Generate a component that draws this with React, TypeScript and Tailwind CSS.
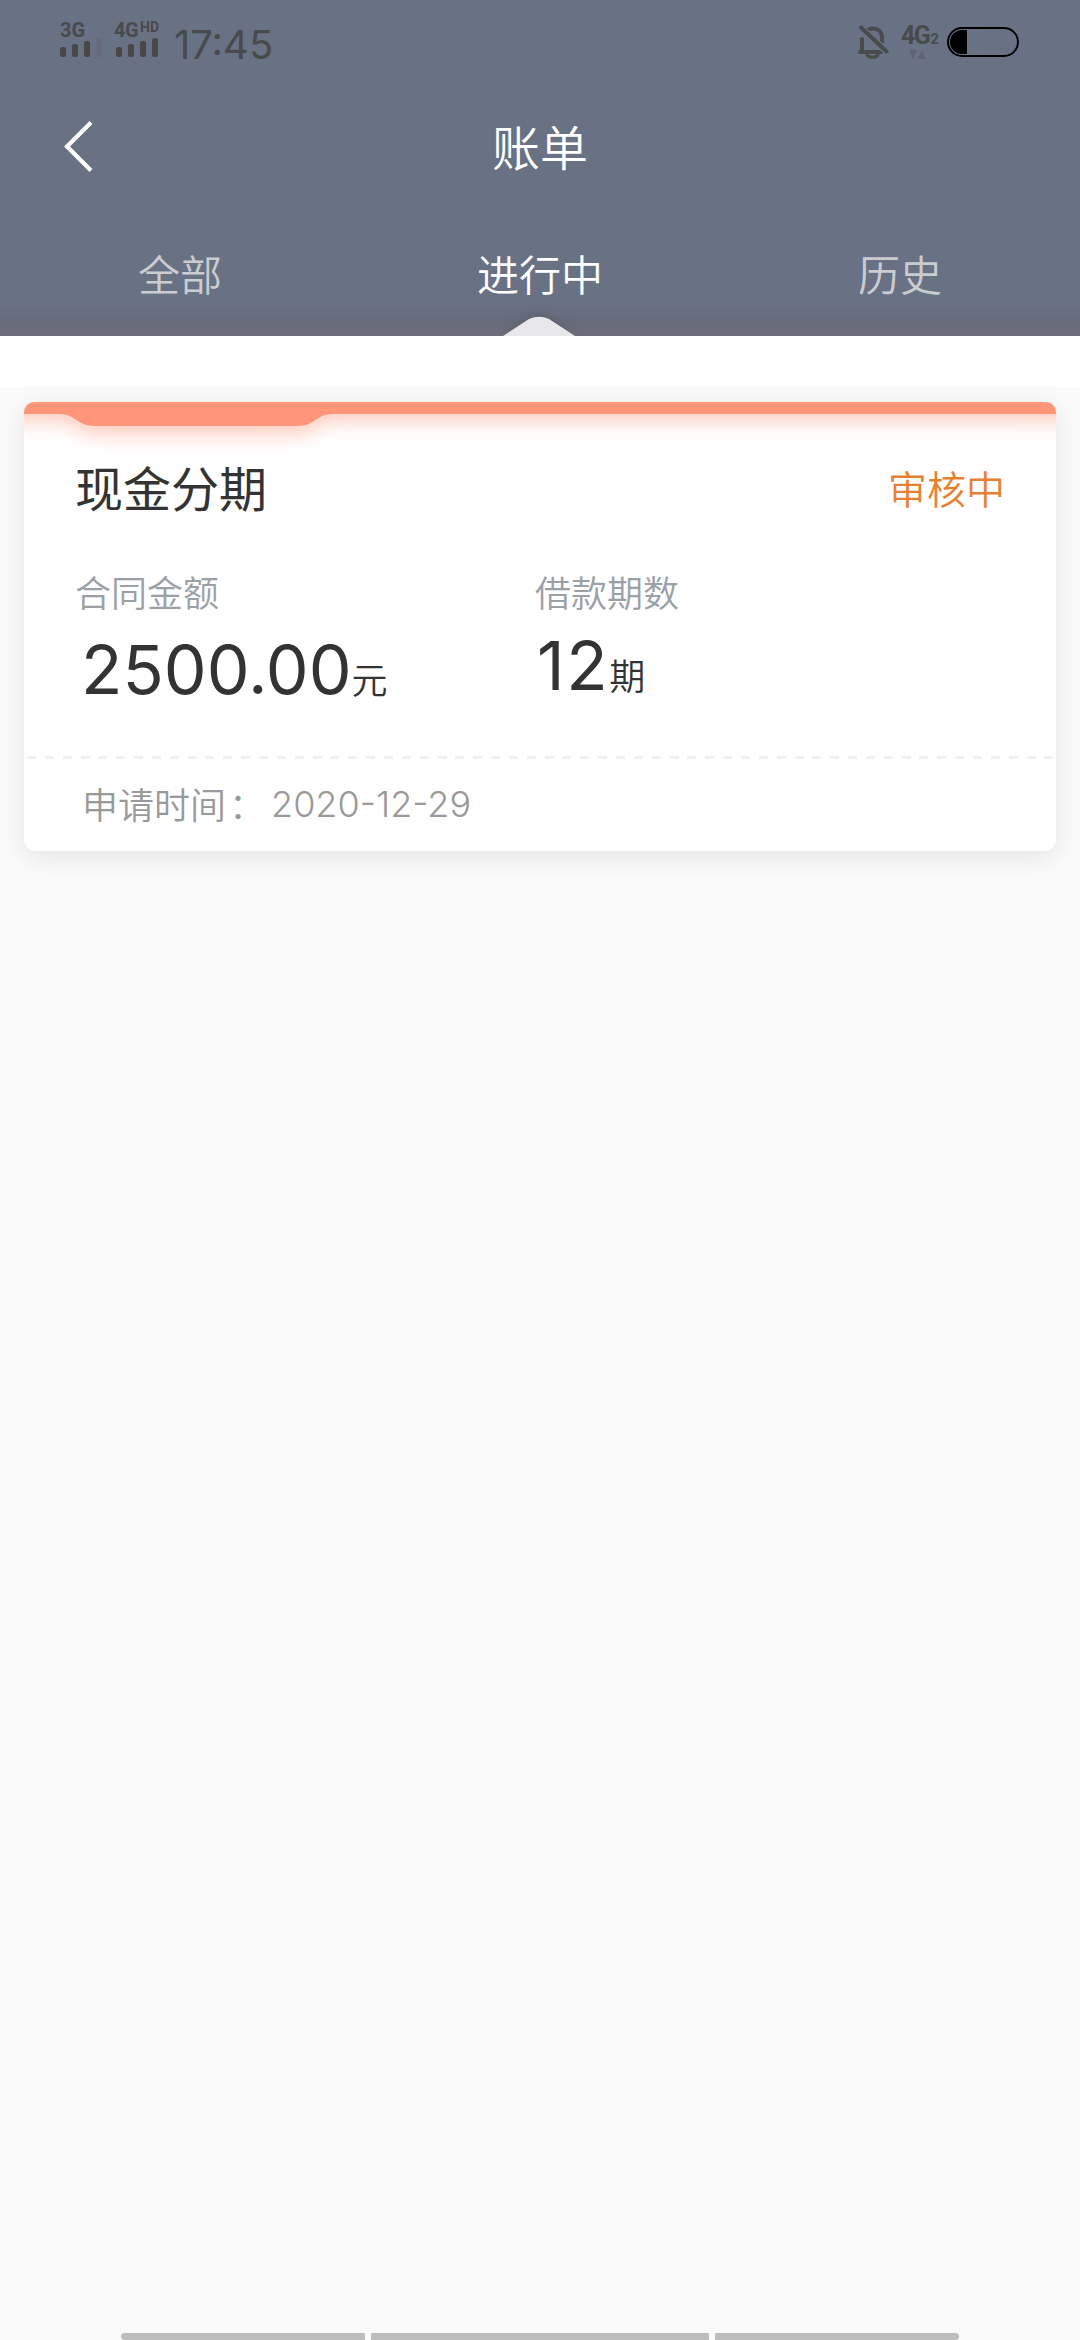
import { clsx } from "clsx";

interface Bill {
  name: string;
  status: string;
  amount: string;
  periods: number;
  appliedAt: string;
}

const TABS = ["全部", "进行中", "历史"];

const BILLS: Bill[] = [
  { name: "现金分期", status: "审核中", amount: "2500.00", periods: 12, appliedAt: "2020-12-29" },
];

function SignalBars({ level }: { level: number }) {
  const heights = [10, 13, 16, 19];
  return (
    <svg width="42" height="19" viewBox="0 0 42 19" className="block">
      {heights.map((h, i) => (
        <rect key={h} x={i * 12} y={19 - h} width="6" height={h} rx="2" fill={i < level ? "#484848" : "#656a7c"} />
      ))}
    </svg>
  );
}

function StatusBar() {
  return (
    <div className="flex h-[84px] items-start justify-between pl-[60px] pr-[61px] text-[#484a4c]">
      <div className="flex">
        <div className="w-[56px] pt-[20px]">
          <div className="h-[18px] font-[Roboto] text-[20px] font-bold leading-[20px]">3G</div>
          <SignalBars level={3} />
        </div>
        <div className="w-[58px] pt-[20px]">
          <div className="-ml-[2px] flex h-[18px] font-[Roboto] text-[20px] font-bold leading-[20px] tracking-[-0.5px]">
            4G<span className="pl-[2px] text-[14px] leading-[14px] tracking-normal">HD</span>
          </div>
          <SignalBars level={4} />
        </div>
        <div className="pt-[25px] font-[Inter] text-[40px] leading-[40px]">17:45</div>
      </div>

      <div className="flex">
        <svg width="32" height="36" viewBox="0 0 32 36" className="mt-[24px]" fill="none" stroke="#484a4c" strokeLinecap="round">
          <path d="M5 27V13.500M10 6.500C12 5 14 4.500 16 4.500c5.500 0 9 3.500 9 9V19" strokeWidth="4" strokeLinecap="butt" />
          <path d="M3 28h21" strokeWidth="4" />
          <path d="M10 31c1.500 3 9.500 3 11 0" strokeWidth="3" />
          <path d="M5 5L29 27" stroke="#697185" strokeWidth="7" strokeLinecap="butt" />
          <path d="M4 3.500L29.500 27.500" strokeWidth="4" />
        </svg>
        <div className="w-[58px] pl-[12px] pt-[23px]">
          <div className="flex h-[27px] items-baseline font-[Roboto] text-[25px] font-bold leading-[26px] tracking-[-1.500px]">
            4G<span className="pl-[1px] text-[15px]">2</span>
          </div>
          <svg width="17" height="9" viewBox="0 0 17 9" className="ml-[8px]" fill="#5f6472">
            <path d="M0 0h8L4 9zM9 9h8l-4-9z" />
          </svg>
        </div>
        <svg width="72" height="30" viewBox="0 0 72 30" className="mt-[27px]">
          <rect x="1" y="1" width="70" height="28" rx="14" fill="none" stroke="#000" strokeWidth="2" />
          <path d="M20 3v24h-5a12 12 0 0 1 0-24z" />
        </svg>
      </div>
    </div>
  );
}

function Header() {
  return (
    <header className="h-[336px] overflow-hidden bg-[#697185]">
      <StatusBar />
      <div className="relative flex h-[130px] items-center justify-center">
        <svg width="30" height="52" viewBox="0 0 30 52" className="absolute left-[64px] top-[37px]" fill="none" stroke="#fff" strokeWidth="4.200">
          <path d="M27 1.500L3 25.500L27 49.500" />
        </svg>
        <h1 className="pb-[8px] text-[48px] leading-[72px] font-[350] text-white">账单</h1>
      </div>
      <nav className="relative grid h-[122px] grid-cols-3">
        <div className="absolute inset-x-0 bottom-0 h-[32px] bg-linear-to-b from-transparent via-[#656a79]/70 to-[#6d6e7a]" />
        {TABS.map((tab, i) => (
          <button
            key={tab}
            className={clsx(
              "relative h-[122px] pb-[5px] text-[42px] font-[350] leading-[60px]",
              i === 1 ? "text-white" : "text-[#cbccd0]"
            )}
          >
            {tab}
          </button>
        ))}
        {/* notch under the selected tab */}
        <svg width="120" height="50" viewBox="0 0 120 50" className="absolute bottom-0 left-[480px]">
          <defs>
            <filter id="halo" x="-40%" y="-80%" width="180%" height="260%">
              <feGaussianBlur stdDeviation="6" />
            </filter>
          </defs>
          <path d="M20 54L50 31q9-5 18 0L98 54z" fill="#55535f" opacity="0.6" filter="url(#halo)" />
          <path d="M23 50L49 33q10-4.500 20 0L95 50z" fill="#e8e8eb" />
        </svg>
      </nav>
    </header>
  );
}

function BillCard({ bill }: { bill: Bill }) {
  return (
    <section className="relative h-[449px] rounded-[12px] bg-white shadow-[0_6px_24px_rgba(0,0,0,0.09)]">
      <svg width="1032" height="74" viewBox="0 0 1032 74" className="absolute left-0 top-0">
        <defs>
          <clipPath id="cardTop">
            <path d="M0 74V12Q0 0 12 0H1020Q1032 0 1032 12V74z" />
          </clipPath>
          <filter id="glow" x="-5%" y="-50%" width="110%" height="300%">
            <feGaussianBlur stdDeviation="10" />
          </filter>
        </defs>
        <g clipPath="url(#cardTop)">
          <path d="M-40-20H1072V19H306C292 19 290 32 272 32H72C54 32 52 19 38 19H-40z" fill="#ff9579" opacity="0.5" filter="url(#glow)" />
          <path d="M0 0H1032V12H308C292 12 292 24 272 24H72C52 24 52 12 36 12H0z" fill="#ff9579" />
        </g>
      </svg>
      <div className="relative flex h-[354px] flex-col px-[51px]">
        <div className="flex h-[167px] items-center justify-between">
          <h2 className="text-[48px] leading-[72px] text-[#333]">{bill.name}</h2>
          <span className="pt-[2px] text-[39px] leading-[60px] font-[350] text-[#e88031]">{bill.status}</span>
        </div>
        <div className="grid grid-cols-[460px_1fr] pt-[2px] text-[#333]">
          <div>
            <div className="h-[58px] text-[36px] font-[350] leading-[40px] text-[#9aa0a6]">合同金额</div>
            <div className="flex items-baseline pl-[6px] leading-[80px]">
              <span className="font-[Inter] text-[68px]">{bill.amount}</span>
              <span className="text-[36px] font-[350]">元</span>
            </div>
          </div>
          <div>
            <div className="h-[54px] text-[36px] font-[350] leading-[40px] text-[#9aa0a6]">借款期数</div>
            <div className="flex items-baseline leading-[80px]">
              <span className="pl-[2px] font-[Inter] text-[68px] tracking-[1.500px]">{bill.periods}</span>
              <span className="text-[36px] font-[350]">期</span>
            </div>
          </div>
        </div>
      </div>
      <div className="mx-[3px] h-[3px] bg-[repeating-linear-gradient(90deg,#f0f0f0_0,#f0f0f0_9px,transparent_9px,transparent_17.850px)]" />
      <div className="flex h-[87px] items-center pl-[58px] text-[36px] font-[350] text-[#999]">
        <span>申请时间</span>
        <span className="pl-[3px]">：</span>
        <span className="pl-[6px] pt-[2px] font-[Inter] font-light">{bill.appliedAt}</span>
      </div>
    </section>
  );
}

export default function App() {
  return (
    <div className="flex h-[2340px] w-[1080px] flex-col overflow-hidden bg-[#fafafa] font-['Noto_Sans_CJK_SC',sans-serif]">
      <Header />
      <div className="h-[51px] bg-white" />
      <main className="flex-1 px-[24px] pt-[15px]">
        {BILLS.map((bill) => (
          <BillCard key={bill.name} bill={bill} />
        ))}
      </main>
      {/* gesture bar */}
      <div className="flex h-[7px] gap-[6px] px-[121px]">
        <div className="w-[244px] rounded-l-full bg-[#bdbdbd]" />
        <div className="flex-1 bg-[#bdbdbd]" />
        <div className="w-[244px] rounded-r-full bg-[#bdbdbd]" />
      </div>
    </div>
  );
}
